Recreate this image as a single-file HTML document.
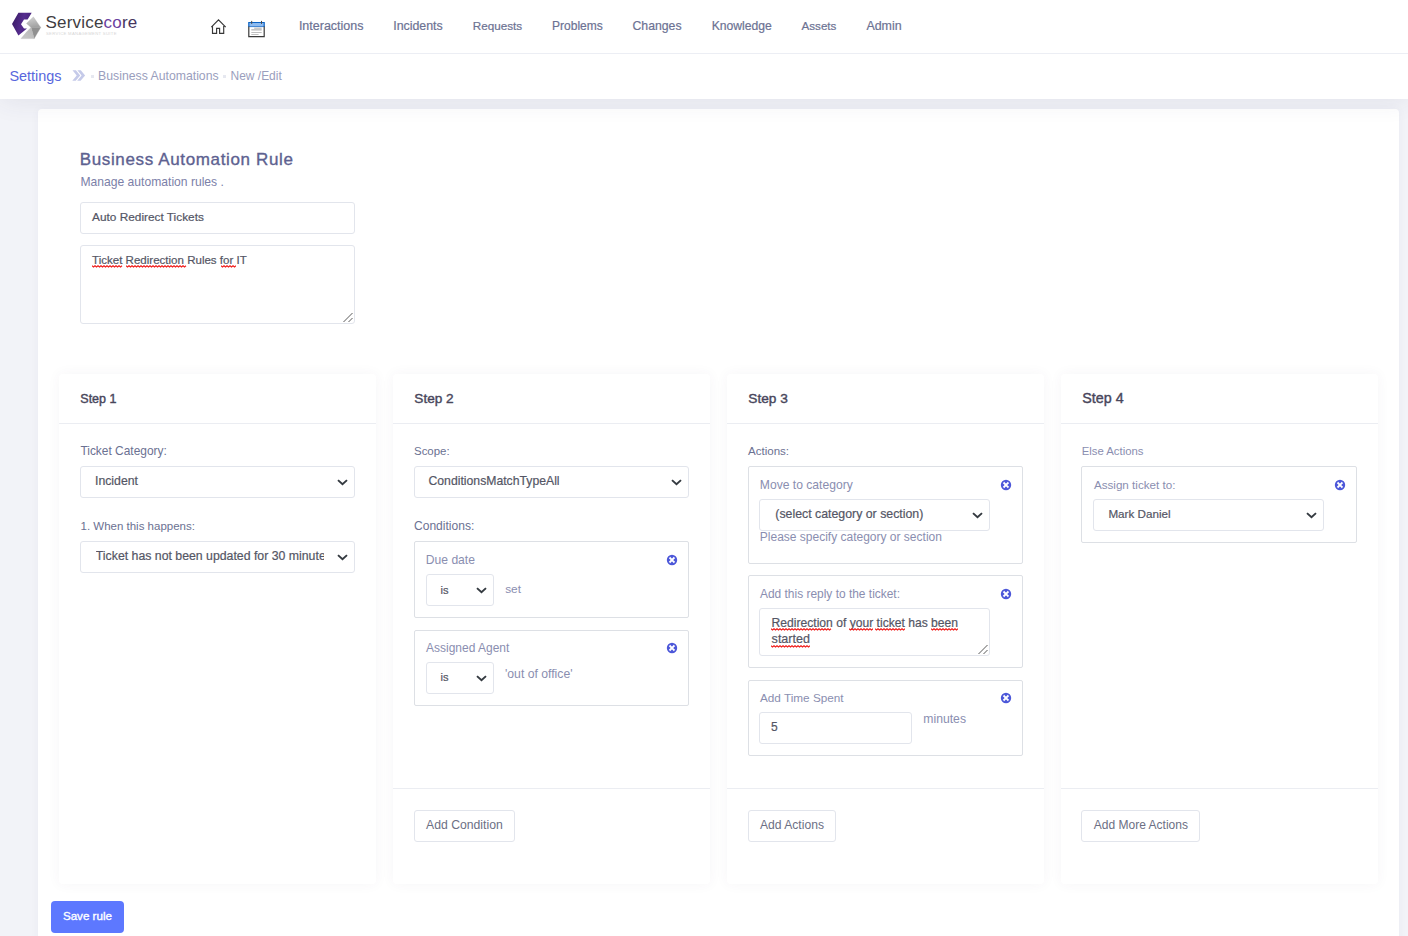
<!DOCTYPE html>
<html><head><meta charset="utf-8">
<style>
*{box-sizing:border-box;margin:0;padding:0}
html,body{width:1408px;height:936px;overflow:hidden;background:#f2f3f8;font-family:"Liberation Sans",sans-serif}
.t{position:absolute;white-space:nowrap;line-height:20px}
.s{-webkit-text-stroke:0.2px currentColor}
.b{position:absolute}
.i{position:absolute;line-height:0}
.i svg{display:block}
.fc{background:#fff;border:1px solid #e2e5ec;border-radius:3px}
.grp{background:#fff;border:1px solid #dde0e5;border-radius:2px}
.card{background:#fff;border-radius:4px;box-shadow:0 0 13px 0 rgba(82,63,105,0.05)}
.btn{background:#fff;border:1px solid #e2e5ec;border-radius:3px}
</style></head><body>
<div class="b " style="left:38px;top:109px;width:1361px;height:891px;background:#fff;border-radius:4px;box-shadow:0 0 10px rgba(60,60,100,0.04)"></div>
<div class="b " style="left:0px;top:54px;width:1408px;height:45px;background:#fff;box-shadow:0 2px 26px rgba(50,50,90,0.09)"></div>
<div class="b " style="left:0px;top:0px;width:1408px;height:54px;background:#fff;border-bottom:1px solid #eceef4"></div>
<div class="i" style="left:10px;top:11px;width:34px;height:30px">
<svg width="34" height="30" viewBox="0 0 34 30">
<defs>
<linearGradient id="gp" x1="0" y1="0" x2="1" y2="0.3"><stop offset="0" stop-color="#35195f"/><stop offset="0.6" stop-color="#552c8e"/><stop offset="1" stop-color="#46237a"/></linearGradient>
<linearGradient id="ga" x1="0" y1="0" x2="0.3" y2="1"><stop offset="0" stop-color="#d6d6d6"/><stop offset="1" stop-color="#a4a4a4"/></linearGradient><linearGradient id="gc" x1="0" y1="1" x2="1" y2="0"><stop offset="0" stop-color="#c9c9c9"/><stop offset="1" stop-color="#b5b5b5"/></linearGradient><linearGradient id="gg" x1="0" y1="0" x2="1" y2="1"><stop offset="0" stop-color="#dcdcdc"/><stop offset="0.45" stop-color="#9a9a9a"/><stop offset="0.6" stop-color="#b8b8b8"/><stop offset="1" stop-color="#8a8a8a"/></linearGradient>
</defs>
<polygon points="8.4,1.8 21.7,1.8 17.6,8.5 14,8.5 11,13.2 14,17.4 17,17.4 8.4,24.5 2,13" fill="url(#gp)"/>
<polygon points="23.4,6 30.7,16.4 21.1,16.4 16.5,12.4" fill="url(#ga)" stroke="#a8a8a8" stroke-width="0.35"/><polygon points="21.1,16.4 30.7,16.4 24.2,27.6" fill="#909090" stroke="#999" stroke-width="0.35"/><polygon points="11.1,27.6 16.8,20.8 21.1,16.4 24.2,27.6" fill="url(#gc)" stroke="#b0b0b0" stroke-width="0.35"/>
</svg></div>
<div class="t" style="left:45.5px;top:13.41px;font-size:17px;color:#3f3d42;letter-spacing:0.2px">Service<span style="color:#6a3fa0">co</span><span style="color:#46355e">re</span></div>
<div class="t" style="left:46px;top:31px;font-size:4.2px;line-height:6px;color:#d6d6d6;letter-spacing:0.33px">SERVICE MANAGEMENT SUITE</div>
<div class="i" style="left:209px;top:18px;width:19px;height:18px"><svg width="19" height="18" viewBox="0 0 19 18">
<path d="M2.3 9.1L9.5 1.9l7.2 7.2M3.5 8v7.4h4.1V10.4h3v5h4.1V8" fill="none" stroke="#383838" stroke-width="1.15" stroke-linejoin="miter"/></svg></div>
<div class="i" style="left:247px;top:20px;width:19px;height:18px"><svg width="19" height="18" viewBox="0 0 19 18">
<rect x="1.2" y="1.9" width="16.6" height="15.2" fill="#fff"/>
<rect x="1.8" y="2.5" width="15.4" height="4" fill="#8dbbf0"/>
<path d="M1.8 7V2.5h15.4V7" fill="none" stroke="#0b63c5" stroke-width="1.2"/>
<path d="M1.8 6.6h15.4" stroke="#2a74c9" stroke-width="0.9"/>
<path d="M1.8 6.4v10.3h15.4V6.4" fill="none" stroke="#3a3a3a" stroke-width="1.2"/>
<path d="M4.7 0.9v3M14.5 0.9v3" stroke="#4a4a4a" stroke-width="1"/>
<rect x="7.2" y="7.5" width="7.5" height="1.6" fill="#c9c9c9"/><rect x="4.3" y="9" width="10.4" height="1.6" fill="#c4c4c4"/>
<path d="M4.3 12.5h10.4M4.3 14.5h7.3" stroke="#b8b8b8" stroke-width="0.9"/>
</svg></div>
<div class="t s" style="left:298.90px;top:15.97px;font-size:12.51px;color:#6c7293;">Interactions</div>
<div class="t s" style="left:393.20px;top:16.01px;font-size:12.38px;color:#6c7293;">Incidents</div>
<div class="t s" style="left:472.80px;top:16.25px;font-size:11.69px;color:#6c7293;">Requests</div>
<div class="t s" style="left:552.00px;top:16.14px;font-size:12.02px;color:#6c7293;">Problems</div>
<div class="t s" style="left:632.50px;top:16.05px;font-size:12.26px;color:#6c7293;">Changes</div>
<div class="t s" style="left:711.70px;top:16.09px;font-size:12.16px;color:#6c7293;">Knowledge</div>
<div class="t s" style="left:801.60px;top:16.28px;font-size:11.6px;color:#6c7293;">Assets</div>
<div class="t s" style="left:866.40px;top:16.00px;font-size:12.42px;color:#6c7293;">Admin</div>
<div class="t" style="left:9.40px;top:66.30px;font-size:14.44px;color:#5867dd;">Settings</div>
<div class="i" style="left:66px;top:64px;width:24px;height:24px"><svg width="24" height="24" viewBox="0 0 24 24">
<polygon points="6.5,6.3 9.9,6.3 14.2,11.6 9.7,16.7 6.3,16.7 10.7,11.6" fill="#c5cae9"/>
<polygon points="11.4,6.3 14.8,6.3 19.1,11.6 14.6,16.7 11.2,16.7 15.6,11.6" fill="#c5cae9"/></svg></div>
<div class="b " style="left:91px;top:75px;width:3px;height:3px;background:#e6e8f0"></div>
<div class="t" style="left:98.10px;top:66.06px;font-size:12.25px;color:#9a9ebd;">Business Automations</div>
<div class="b " style="left:223px;top:75px;width:3px;height:3px;background:#e6e8f0"></div>
<div class="t" style="left:230.60px;top:66.16px;font-size:11.96px;color:#9a9ebd;">New /Edit</div>
<div class="t" style="left:79.70px;top:150.41px;font-size:17px;color:#5d6190;letter-spacing:0.64px;-webkit-text-stroke:0.35px #5d6190;">Business Automation Rule</div>
<div class="t" style="left:80.50px;top:172.10px;font-size:12.12px;color:#7b80a8;">Manage automation rules .</div>
<div class="b fc" style="left:80px;top:202px;width:275px;height:32px;"></div>
<div class="t s" style="left:92.10px;top:207.20px;font-size:11.83px;color:#545665;">Auto Redirect Tickets</div>
<div class="b fc" style="left:80px;top:245px;width:275px;height:79px;"></div>
<div class="i" style="left:341px;top:310px;width:14px;height:14px"><svg width="14" height="14"><path d="M2.5 12L11.5 3M7.5 12L11.5 8" stroke="#5a5a5a" stroke-width="1" fill="none"/></svg></div>
<div class="t s" style="left:92.10px;top:250.30px;font-size:11.54px;color:#545665;">Ticket Redirection Rules for IT</div>
<div class="i" style="left:92px;top:265px;width:31px;height:3px;overflow:hidden"><svg width="31" height="3"><polyline points="0.0,0.7 1.5,1.9 3.0,0.7 4.5,1.9 6.0,0.7 7.5,1.9 9.0,0.7 10.5,1.9 12.0,0.7 13.5,1.9 15.0,0.7 16.5,1.9 18.0,0.7 19.5,1.9 21.0,0.7 22.5,1.9 24.0,0.7 25.5,1.9 27.0,0.7 28.5,1.9 30.0,0.7" fill="none" stroke="#f0201e" stroke-width="1.15"/></svg></div>
<div class="i" style="left:126px;top:265px;width:61px;height:3px;overflow:hidden"><svg width="61" height="3"><polyline points="0.0,0.7 1.5,1.9 3.0,0.7 4.5,1.9 6.0,0.7 7.5,1.9 9.0,0.7 10.5,1.9 12.0,0.7 13.5,1.9 15.0,0.7 16.5,1.9 18.0,0.7 19.5,1.9 21.0,0.7 22.5,1.9 24.0,0.7 25.5,1.9 27.0,0.7 28.5,1.9 30.0,0.7 31.5,1.9 33.0,0.7 34.5,1.9 36.0,0.7 37.5,1.9 39.0,0.7 40.5,1.9 42.0,0.7 43.5,1.9 45.0,0.7 46.5,1.9 48.0,0.7 49.5,1.9 51.0,0.7 52.5,1.9 54.0,0.7 55.5,1.9 57.0,0.7 58.5,1.9 60.0,0.7" fill="none" stroke="#f0201e" stroke-width="1.15"/></svg></div>
<div class="i" style="left:221px;top:265px;width:15px;height:3px;overflow:hidden"><svg width="15" height="3"><polyline points="0.0,0.7 1.5,1.9 3.0,0.7 4.5,1.9 6.0,0.7 7.5,1.9 9.0,0.7 10.5,1.9 12.0,0.7 13.5,1.9 15.0,0.7" fill="none" stroke="#f0201e" stroke-width="1.15"/></svg></div>
<div class="b card" style="left:59px;top:374px;width:317px;height:510px;"></div>
<div class="b " style="left:59px;top:423px;width:317px;height:1px;background:#ebedf2"></div>
<div class="t" style="left:80.30px;top:388.96px;font-size:12.53px;color:#48465b;-webkit-text-stroke:0.4px #48465b;">Step 1</div>
<div class="b card" style="left:393px;top:374px;width:317px;height:510px;"></div>
<div class="b " style="left:393px;top:423px;width:317px;height:1px;background:#ebedf2"></div>
<div class="b " style="left:393px;top:788px;width:317px;height:1px;background:#ebedf2"></div>
<div class="t" style="left:414.30px;top:388.58px;font-size:13.63px;color:#48465b;-webkit-text-stroke:0.4px #48465b;">Step 2</div>
<div class="b card" style="left:727px;top:374px;width:317px;height:510px;"></div>
<div class="b " style="left:727px;top:423px;width:317px;height:1px;background:#ebedf2"></div>
<div class="b " style="left:727px;top:788px;width:317px;height:1px;background:#ebedf2"></div>
<div class="t" style="left:748.30px;top:388.55px;font-size:13.7px;color:#48465b;-webkit-text-stroke:0.4px #48465b;">Step 3</div>
<div class="b card" style="left:1061px;top:374px;width:317px;height:510px;"></div>
<div class="b " style="left:1061px;top:423px;width:317px;height:1px;background:#ebedf2"></div>
<div class="b " style="left:1061px;top:788px;width:317px;height:1px;background:#ebedf2"></div>
<div class="t" style="left:1082.30px;top:388.35px;font-size:14.29px;color:#48465b;-webkit-text-stroke:0.4px #48465b;">Step 4</div>
<div class="t" style="left:80.40px;top:441.16px;font-size:11.95px;color:#6b7192;">Ticket Category:</div>
<div class="b fc" style="left:80px;top:466px;width:275px;height:32px;"></div>
<div class="i" style="left:337px;top:479px;width:11px;height:7px"><svg width="11" height="7" viewBox="0 0 11 7"><path d="M1 1.1l4.5 4.2L10 1.1" fill="none" stroke="#343a40" stroke-width="1.9"/></svg></div>
<div class="t s" style="left:95.00px;top:471.05px;font-size:12.27px;color:#545665;">Incident</div>
<div class="t" style="left:80.50px;top:516.31px;font-size:11.51px;color:#6b7192;">1. When this happens:</div>
<div class="b fc" style="left:80px;top:541px;width:275px;height:32px;"></div>
<div class="i" style="left:337px;top:554px;width:11px;height:7px"><svg width="11" height="7" viewBox="0 0 11 7"><path d="M1 1.1l4.5 4.2L10 1.1" fill="none" stroke="#343a40" stroke-width="1.9"/></svg></div>
<div class="t s" style="left:95.80px;top:546.04px;font-size:12.3px;color:#545665;width:228px;overflow:hidden;">Ticket has not been updated for 30 minute</div>
<div class="t" style="left:414.00px;top:441.33px;font-size:11.46px;color:#6b7192;">Scope:</div>
<div class="b fc" style="left:414px;top:466px;width:275px;height:32px;"></div>
<div class="i" style="left:671px;top:479px;width:11px;height:7px"><svg width="11" height="7" viewBox="0 0 11 7"><path d="M1 1.1l4.5 4.2L10 1.1" fill="none" stroke="#343a40" stroke-width="1.9"/></svg></div>
<div class="t s" style="left:428.50px;top:471.07px;font-size:12.22px;color:#545665;">ConditionsMatchTypeAll</div>
<div class="t" style="left:414.00px;top:516.12px;font-size:12.05px;color:#6b7192;">Conditions:</div>
<div class="b grp" style="left:414px;top:541px;width:275px;height:77px;"></div>
<div class="t" style="left:425.80px;top:550.10px;font-size:12.12px;color:#8a8eb0;">Due date</div>
<div class="i" style="left:666px;top:554px;width:12px;height:12px"><svg width="12" height="12" viewBox="0 0 12 12"><circle cx="6" cy="6" r="5.2" fill="#4c57d9"/><path d="M4.2 4.2l3.6 3.6M7.8 4.2l-3.6 3.6" stroke="#fff" stroke-width="1.9" stroke-linecap="square"/></svg></div>
<div class="b fc" style="left:426px;top:574px;width:68px;height:32px;"></div>
<div class="i" style="left:476px;top:587px;width:11px;height:7px"><svg width="11" height="7" viewBox="0 0 11 7"><path d="M1 1.1l4.5 4.2L10 1.1" fill="none" stroke="#343a40" stroke-width="1.9"/></svg></div>
<div class="t s" style="left:440.50px;top:580.45px;font-size:11.11px;color:#545665;">is</div>
<div class="t" style="left:505.20px;top:579.20px;font-size:11.84px;color:#8a8eb0;">set</div>
<div class="b grp" style="left:414px;top:630px;width:275px;height:76px;"></div>
<div class="t" style="left:426.10px;top:638.15px;font-size:11.97px;color:#8a8eb0;">Assigned Agent</div>
<div class="i" style="left:666px;top:642px;width:12px;height:12px"><svg width="12" height="12" viewBox="0 0 12 12"><circle cx="6" cy="6" r="5.2" fill="#4c57d9"/><path d="M4.2 4.2l3.6 3.6M7.8 4.2l-3.6 3.6" stroke="#fff" stroke-width="1.9" stroke-linecap="square"/></svg></div>
<div class="b fc" style="left:426px;top:662px;width:68px;height:32px;"></div>
<div class="i" style="left:476px;top:675px;width:11px;height:7px"><svg width="11" height="7" viewBox="0 0 11 7"><path d="M1 1.1l4.5 4.2L10 1.1" fill="none" stroke="#343a40" stroke-width="1.9"/></svg></div>
<div class="t s" style="left:440.50px;top:667.45px;font-size:11.11px;color:#545665;">is</div>
<div class="t" style="left:505.00px;top:664.07px;font-size:12.21px;color:#8a8eb0;">'out of office'</div>
<div class="b btn" style="left:414px;top:810px;width:101px;height:32px;"></div>
<div class="t" style="left:426.00px;top:815.06px;font-size:12.23px;color:#6c6f84;">Add Condition</div>
<div class="t" style="left:748.00px;top:441.29px;font-size:11.56px;color:#6b7192;">Actions:</div>
<div class="b grp" style="left:748px;top:466px;width:275px;height:98px;"></div>
<div class="t" style="left:759.80px;top:475.09px;font-size:12.14px;color:#8a8eb0;">Move to category</div>
<div class="i" style="left:1000px;top:479px;width:12px;height:12px"><svg width="12" height="12" viewBox="0 0 12 12"><circle cx="6" cy="6" r="5.2" fill="#4c57d9"/><path d="M4.2 4.2l3.6 3.6M7.8 4.2l-3.6 3.6" stroke="#fff" stroke-width="1.9" stroke-linecap="square"/></svg></div>
<div class="b fc" style="left:759px;top:499px;width:231px;height:32px;"></div>
<div class="i" style="left:972px;top:512px;width:11px;height:7px"><svg width="11" height="7" viewBox="0 0 11 7"><path d="M1 1.1l4.5 4.2L10 1.1" fill="none" stroke="#343a40" stroke-width="1.9"/></svg></div>
<div class="t s" style="left:775.30px;top:504.02px;font-size:12.34px;color:#545665;">(select category or section)</div>
<div class="t" style="left:759.80px;top:527.14px;font-size:12.01px;color:#8a8eb0;">Please specify category or section</div>
<div class="b grp" style="left:748px;top:575px;width:275px;height:93px;"></div>
<div class="t" style="left:760.00px;top:584.16px;font-size:11.94px;color:#8a8eb0;">Add this reply to the ticket:</div>
<div class="i" style="left:1000px;top:588px;width:12px;height:12px"><svg width="12" height="12" viewBox="0 0 12 12"><circle cx="6" cy="6" r="5.2" fill="#4c57d9"/><path d="M4.2 4.2l3.6 3.6M7.8 4.2l-3.6 3.6" stroke="#fff" stroke-width="1.9" stroke-linecap="square"/></svg></div>
<div class="b fc" style="left:759px;top:608px;width:231px;height:48px;"></div>
<div class="i" style="left:976px;top:642px;width:14px;height:14px"><svg width="14" height="14"><path d="M2.5 12L11.5 3M7.5 12L11.5 8" stroke="#5a5a5a" stroke-width="1" fill="none"/></svg></div>
<div class="t s" style="left:771.60px;top:613.10px;font-size:12.11px;color:#545665;">Redirection of your ticket has been</div>
<div class="t s" style="left:771.60px;top:628.94px;font-size:12.57px;color:#545665;">started</div>
<div class="i" style="left:771px;top:628px;width:61px;height:3px;overflow:hidden"><svg width="61" height="3"><polyline points="0.0,0.7 1.5,1.9 3.0,0.7 4.5,1.9 6.0,0.7 7.5,1.9 9.0,0.7 10.5,1.9 12.0,0.7 13.5,1.9 15.0,0.7 16.5,1.9 18.0,0.7 19.5,1.9 21.0,0.7 22.5,1.9 24.0,0.7 25.5,1.9 27.0,0.7 28.5,1.9 30.0,0.7 31.5,1.9 33.0,0.7 34.5,1.9 36.0,0.7 37.5,1.9 39.0,0.7 40.5,1.9 42.0,0.7 43.5,1.9 45.0,0.7 46.5,1.9 48.0,0.7 49.5,1.9 51.0,0.7 52.5,1.9 54.0,0.7 55.5,1.9 57.0,0.7 58.5,1.9 60.0,0.7" fill="none" stroke="#f0201e" stroke-width="1.15"/></svg></div>
<div class="i" style="left:849px;top:628px;width:24px;height:3px;overflow:hidden"><svg width="24" height="3"><polyline points="0.0,0.7 1.5,1.9 3.0,0.7 4.5,1.9 6.0,0.7 7.5,1.9 9.0,0.7 10.5,1.9 12.0,0.7 13.5,1.9 15.0,0.7 16.5,1.9 18.0,0.7 19.5,1.9 21.0,0.7 22.5,1.9 24.0,0.7" fill="none" stroke="#f0201e" stroke-width="1.15"/></svg></div>
<div class="i" style="left:875px;top:628px;width:30px;height:3px;overflow:hidden"><svg width="30" height="3"><polyline points="0.0,0.7 1.5,1.9 3.0,0.7 4.5,1.9 6.0,0.7 7.5,1.9 9.0,0.7 10.5,1.9 12.0,0.7 13.5,1.9 15.0,0.7 16.5,1.9 18.0,0.7 19.5,1.9 21.0,0.7 22.5,1.9 24.0,0.7 25.5,1.9 27.0,0.7 28.5,1.9 30.0,0.7" fill="none" stroke="#f0201e" stroke-width="1.15"/></svg></div>
<div class="i" style="left:931px;top:628px;width:27px;height:3px;overflow:hidden"><svg width="27" height="3"><polyline points="0.0,0.7 1.5,1.9 3.0,0.7 4.5,1.9 6.0,0.7 7.5,1.9 9.0,0.7 10.5,1.9 12.0,0.7 13.5,1.9 15.0,0.7 16.5,1.9 18.0,0.7 19.5,1.9 21.0,0.7 22.5,1.9 24.0,0.7 25.5,1.9 27.0,0.7" fill="none" stroke="#f0201e" stroke-width="1.15"/></svg></div>
<div class="i" style="left:771px;top:645px;width:39px;height:3px;overflow:hidden"><svg width="39" height="3"><polyline points="0.0,0.7 1.5,1.9 3.0,0.7 4.5,1.9 6.0,0.7 7.5,1.9 9.0,0.7 10.5,1.9 12.0,0.7 13.5,1.9 15.0,0.7 16.5,1.9 18.0,0.7 19.5,1.9 21.0,0.7 22.5,1.9 24.0,0.7 25.5,1.9 27.0,0.7 28.5,1.9 30.0,0.7 31.5,1.9 33.0,0.7 34.5,1.9 36.0,0.7 37.5,1.9 39.0,0.7" fill="none" stroke="#f0201e" stroke-width="1.15"/></svg></div>
<div class="b grp" style="left:748px;top:680px;width:275px;height:76px;"></div>
<div class="t" style="left:760.00px;top:688.23px;font-size:11.75px;color:#8a8eb0;">Add Time Spent</div>
<div class="i" style="left:1000px;top:692px;width:12px;height:12px"><svg width="12" height="12" viewBox="0 0 12 12"><circle cx="6" cy="6" r="5.2" fill="#4c57d9"/><path d="M4.2 4.2l3.6 3.6M7.8 4.2l-3.6 3.6" stroke="#fff" stroke-width="1.9" stroke-linecap="square"/></svg></div>
<div class="b fc" style="left:759px;top:712px;width:153px;height:32px;"></div>
<div class="t s" style="left:771.00px;top:717.14px;font-size:12px;color:#545665;">5</div>
<div class="t" style="left:923.30px;top:709.07px;font-size:12.2px;color:#8a8eb0;">minutes</div>
<div class="b btn" style="left:748px;top:810px;width:88px;height:32px;"></div>
<div class="t" style="left:760.00px;top:815.10px;font-size:12.12px;color:#6c6f84;">Add Actions</div>
<div class="t" style="left:1081.70px;top:441.37px;font-size:11.35px;color:#8a8eb0;">Else Actions</div>
<div class="b grp" style="left:1081px;top:466px;width:276px;height:77px;"></div>
<div class="t" style="left:1093.90px;top:475.26px;font-size:11.65px;color:#8a8eb0;">Assign ticket to:</div>
<div class="i" style="left:1334px;top:479px;width:12px;height:12px"><svg width="12" height="12" viewBox="0 0 12 12"><circle cx="6" cy="6" r="5.2" fill="#4c57d9"/><path d="M4.2 4.2l3.6 3.6M7.8 4.2l-3.6 3.6" stroke="#fff" stroke-width="1.9" stroke-linecap="square"/></svg></div>
<div class="b fc" style="left:1093px;top:499px;width:231px;height:32px;"></div>
<div class="i" style="left:1306px;top:512px;width:11px;height:7px"><svg width="11" height="7" viewBox="0 0 11 7"><path d="M1 1.1l4.5 4.2L10 1.1" fill="none" stroke="#343a40" stroke-width="1.9"/></svg></div>
<div class="t s" style="left:1108.40px;top:504.26px;font-size:11.66px;color:#545665;">Mark Daniel</div>
<div class="b btn" style="left:1081px;top:810px;width:119px;height:32px;"></div>
<div class="t" style="left:1093.80px;top:815.14px;font-size:12.02px;color:#6c6f84;">Add More Actions</div>
<div class="b " style="left:51px;top:901px;width:73px;height:32px;background:#5d78ff;border-radius:4px"></div>
<div class="t" style="left:62.90px;top:906.27px;font-size:11.64px;color:#fff;-webkit-text-stroke:0.35px #fff;">Save rule</div>
</body></html>
